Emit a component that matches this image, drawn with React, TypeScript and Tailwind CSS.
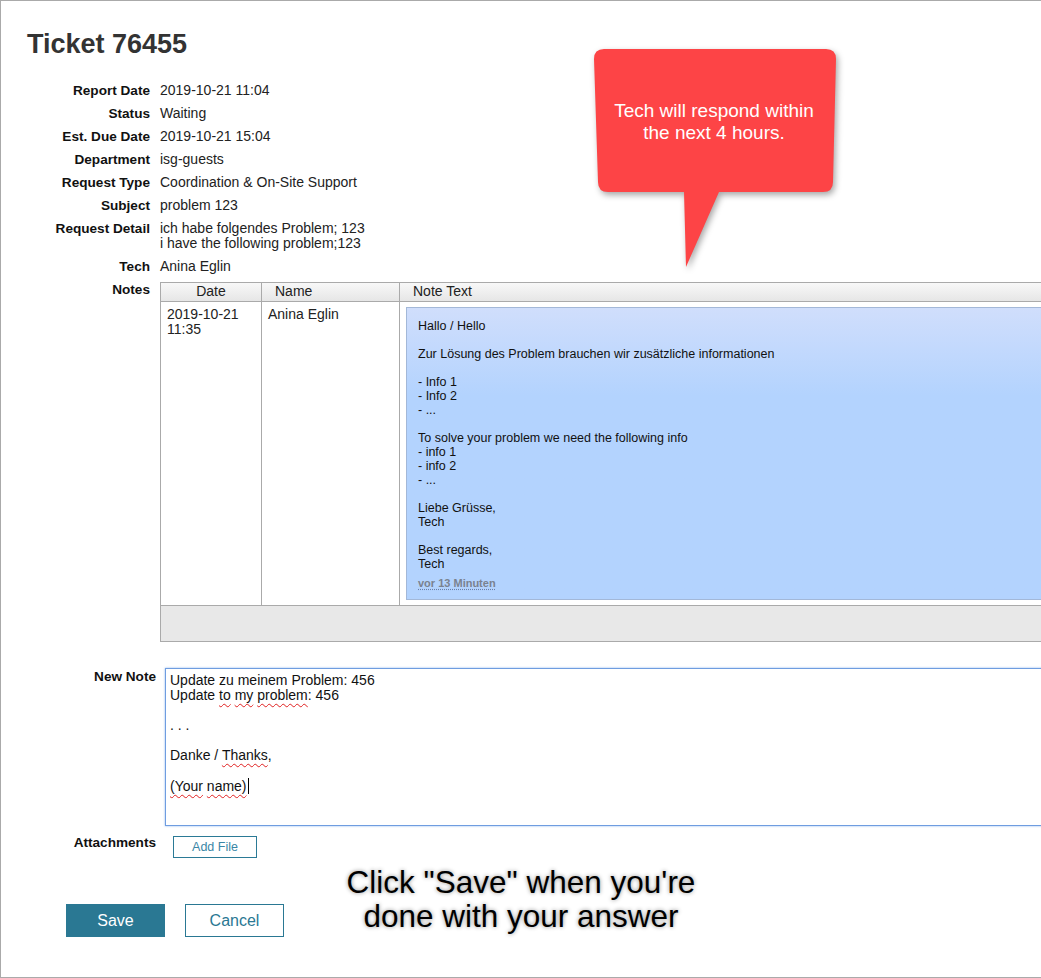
import React from "react";

const info: { label: string; value: string[] }[] = [
  { label: "Report Date", value: ["2019-10-21 11:04"] },
  { label: "Status", value: ["Waiting"] },
  { label: "Est. Due Date", value: ["2019-10-21 15:04"] },
  { label: "Department", value: ["isg-guests"] },
  { label: "Request Type", value: ["Coordination & On-Site Support"] },
  { label: "Subject", value: ["problem 123"] },
  { label: "Request Detail", value: ["ich habe folgendes Problem; 123", "i have the following problem;123"] },
  { label: "Tech", value: ["Anina Eglin"] },
];

const noteLines = [
  "Hallo / Hello",
  "",
  "Zur Lösung des Problem brauchen wir zusätzliche informationen",
  "",
  "- Info 1",
  "- Info 2",
  "- ...",
  "",
  "To solve your problem we need the following info",
  "- info 1",
  "- info 2",
  "- ...",
  "",
  "Liebe Grüsse,",
  "Tech",
  "",
  "Best regards,",
  "Tech",
];

// red squiggle like the browser spell checker
function Typo({ children }: { children: React.ReactNode }) {
  return (
    <span className="underline decoration-wavy decoration-[#e02020] decoration-1 underline-offset-[3px]">
      {children}
    </span>
  );
}

function Bubble() {
  return (
    <>
      <svg
        className="absolute left-[585px] top-[40px] drop-shadow-[2px_3px_3px_rgba(0,0,0,0.35)]"
        width="262"
        height="236"
        viewBox="0 0 262 236"
      >
        <path
          d="M18,8 H240 Q250,8 250,18 L247,141 Q247,151 237,151 H133 L100,226 L98,151 H22 Q12,151 12,141 L8,18 Q8,8 18,8 Z"
          fill="#fd4446"
        />
      </svg>
      <div className="absolute left-[593px] top-[99px] w-[240px] text-center text-[19px] leading-[22px] text-white">
        Tech will respond within
        <br />
        the next 4 hours.
      </div>
    </>
  );
}

export default function App() {
  return (
    <div className="relative w-[1041px] h-[978px] overflow-hidden bg-white border-l border-t border-b border-[#aaaaaa] font-['Liberation_Sans',Arial,sans-serif] text-[#222]">
      <h1 className="ml-[26px] mt-[28px] text-[27px] leading-[30px] font-bold text-[#333]">Ticket 76455</h1>

      <div className="mt-[24px] flex flex-col gap-[8px]">
        {info.map((row) => (
          <div key={row.label} className="flex">
            <div className="w-[149px] shrink-0 text-right font-bold text-[13.6px] leading-[15px] text-[#111]">
              {row.label}
            </div>
            <div className="ml-[10px] text-[14px] leading-[15px]">
              {row.value.map((v) => (
                <div key={v}>{v}</div>
              ))}
            </div>
          </div>
        ))}

        <div className="flex">
          <div className="w-[149px] shrink-0 text-right font-bold text-[13.6px] leading-[15px] text-[#111]">
            Notes
          </div>
          <div className="ml-[10px] w-[1000px] shrink-0 border-l border-[#aaaaaa] text-[14px] leading-[15px]">
            <div className="flex h-[20px] border-t border-b border-[#aaaaaa] bg-linear-to-b from-[#f8f8f8] to-[#e6e6e6]">
              <div className="w-[100px] text-center leading-[17px]">Date</div>
              <div className="w-[138px] border-l border-[#aaaaaa] pl-[13px] leading-[17px]">Name</div>
              <div className="flex-1 border-l border-[#aaaaaa] pl-[13px] leading-[17px]">Note Text</div>
            </div>
            <div className="flex">
              <div className="w-[100px] pt-[5px] pl-[6px]">
                2019-10-21
                <br />
                11:35
              </div>
              <div className="w-[138px] border-l border-[#aaaaaa] pt-[5px] pl-[6px]">Anina Eglin</div>
              <div className="flex-1 border-l border-[#aaaaaa] pt-[5px] pb-[5px] pl-[6px]">
                <div className="border border-[#a3b8d8] bg-linear-to-b from-[#d0defc] to-[#b3d3fe] to-30% pt-[11px] pb-[9px] pl-[11px] text-[12.5px] leading-[14px] text-[#111]">
                  {noteLines.map((l, i) => (
                    <div key={i} className="h-[14px] whitespace-pre">
                      {l}
                    </div>
                  ))}
                  <div className="mt-[5px] text-[11px] font-semibold leading-[14px] text-[#7a8290]">
                    <span className="underline decoration-dotted decoration-[#6a7fa8] underline-offset-2">vor 13 Minuten</span>
                  </div>
                </div>
              </div>
            </div>
            <div className="h-[37px] border-t border-b border-[#aaaaaa] bg-[#e8e8e8]" />
          </div>
        </div>
      </div>

      <div className="mt-[26px] flex items-start">
        <div className="w-[155px] shrink-0 pt-[1px] text-right font-bold text-[13.6px] leading-[15px] text-[#111]">New Note</div>
        <div className="ml-[9px] h-[158px] w-[900px] shrink-0 border border-[#6f9de0] shadow-[0_0_2px_#8fb6ee] pt-[4px] pl-[4px] text-[14px] leading-[15px] text-[#111]">
          <div>Update zu meinem Problem: 456</div>
          <div>
            Update <Typo>to</Typo> <Typo>my</Typo> <Typo>problem</Typo>: 456
          </div>
          <div className="h-[15px]" />
          <div>. . .</div>
          <div className="h-[15px]" />
          <div>
            Danke / <Typo>Thanks</Typo>,
          </div>
          <div className="h-[15px]" />
          <div className="flex items-center">
            <Typo>(Your</Typo>&nbsp;<Typo>name)</Typo>
            <span className="ml-[1px] inline-block h-[16px] w-[1px] bg-black" />
          </div>
        </div>
      </div>

      <div className="mt-[9px] flex items-start">
        <div className="w-[155px] shrink-0 text-right font-bold text-[13.6px] leading-[15px] text-[#111]">Attachments</div>
        <button className="ml-[17px] mt-[1px] h-[22px] w-[84px] border border-[#2b7a96] text-[12.5px] leading-[20px] text-[#3a86a6]">
          Add File
        </button>
      </div>

      <div className="ml-[65px] mt-[46px] flex gap-[20px]">
        <button className="h-[33px] w-[99px] bg-[#2a7893] text-[16px] text-white">Save</button>
        <button className="h-[33px] w-[99px] border border-[#2a7893] text-[16px] text-[#2a7893]">Cancel</button>
      </div>

      <div className="absolute left-[300px] top-[864px] w-[440px] text-center text-[31.5px] leading-[34px] text-black [text-shadow:0_0_4px_rgba(0,0,0,0.45)]">
        Click "Save" when you're
        <br />
        done with your answer
      </div>

      <Bubble />
    </div>
  );
}
